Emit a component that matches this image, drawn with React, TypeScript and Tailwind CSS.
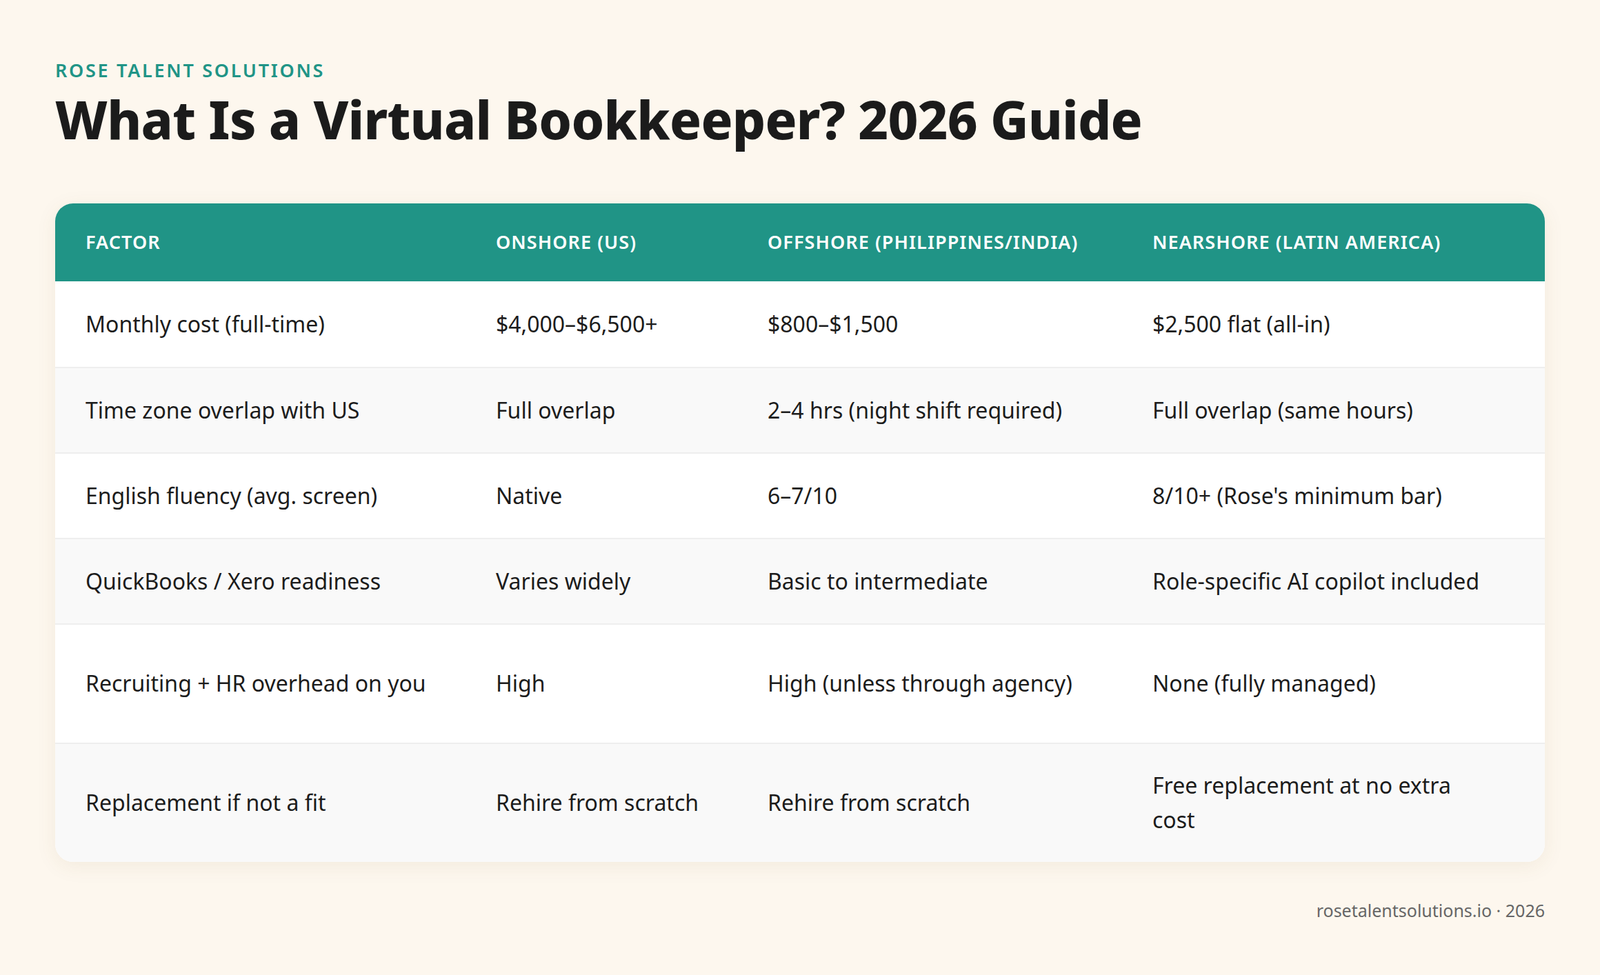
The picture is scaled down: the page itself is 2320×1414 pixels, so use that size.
const rows: [string, string, string, string][] = [
  ["Monthly cost (full-time)", "$4,000–$6,500+", "$800–$1,500", "$2,500 flat (all-in)"],
  ["Time zone overlap with US", "Full overlap", "2–4 hrs (night shift required)", "Full overlap (same hours)"],
  ["English fluency (avg. screen)", "Native", "6–7/10", "8/10+ (Rose's minimum bar)"],
  ["QuickBooks / Xero readiness", "Varies widely", "Basic to intermediate", "Role-specific AI copilot included"],
  ["Recruiting + HR overhead on you", "High", "High (unless through agency)", "None (fully managed)"],
  ["Replacement if not a fit", "Rehire from scratch", "Rehire from scratch", "Free replacement at no extra cost"],
];

const cols = "grid grid-cols-[595px_394px_558px_1fr]";

export default function App() {
  return (
    <div className="min-h-[1414px] w-[2320px] bg-[#fdf7ee] px-[80px] pt-[82px] font-['Poppins','Inter',sans-serif] text-[#1c1c1c]">
      <div className="text-[27px] font-semibold uppercase tracking-[0.1em] text-[#209486]">Rose Talent Solutions</div>
      <h1 className="mt-[12px] text-[76px] font-extrabold leading-none tracking-[-0.01em] text-[#1b1b1b]">
        What Is a Virtual Bookkeeper? 2026 Guide
      </h1>
      <div className="mt-[84px] overflow-hidden rounded-[26px] bg-white shadow-[0_6px_30px_rgba(120,90,40,0.08)]">
        <div className={`${cols} h-[113px] items-center bg-[#209486] px-[44px] text-[27px] font-semibold uppercase tracking-[0.04em] text-white`}>
          <div>Factor</div>
          <div>Onshore (US)</div>
          <div>Offshore (Philippines/India)</div>
          <div>Nearshore (Latin America)</div>
        </div>
        {rows.map((r, i) => (
          <div
            key={i}
            className={`${cols} items-center px-[44px] text-[32px] leading-[50px] ${i % 2 ? "bg-[#f9f9f9]" : "bg-white"} ${i >= 4 ? "h-[173px]" : "h-[124px]"} ${i > 0 ? "border-t-2 border-[#eeeeee]" : ""}`}
          >
            {r.map((c, j) => (
              <div key={j} className="pr-[50px]">{c}</div>
            ))}
          </div>
        ))}
      </div>
      <div className="mt-[52px] text-right text-[25px] text-[#666]">rosetalentsolutions.io · 2026</div>
    </div>
  );
}
